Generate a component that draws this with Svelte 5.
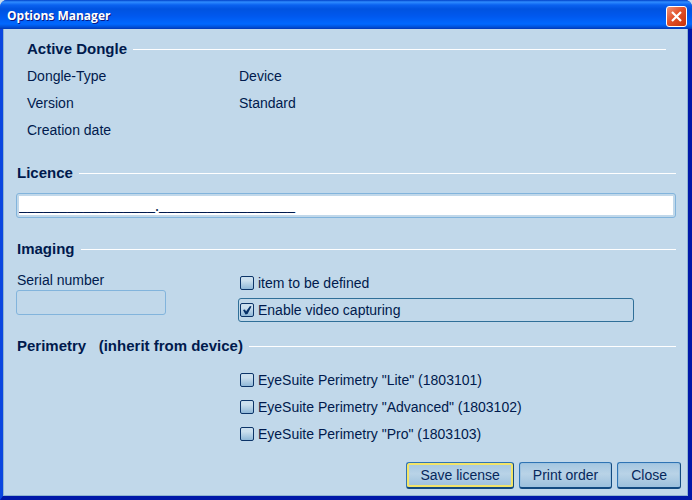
<script lang="ts">
	const dongle = [
		{ label: 'Dongle-Type', value: 'Device' },
		{ label: 'Version', value: 'Standard' },
		{ label: 'Creation date', value: '' }
	];

	let licence = $state('_'.repeat(17) + '.' + '_'.repeat(17));
	let serial = $state('');

	let imaging = $state([
		{ label: 'item to be defined', checked: false, current: false },
		{ label: 'Enable video capturing', checked: true, current: true }
	]);

	let perimetry = $state([
		{ label: 'EyeSuite Perimetry "Lite" (1803101)', checked: false },
		{ label: 'EyeSuite Perimetry "Advanced" (1803102)', checked: false },
		{ label: 'EyeSuite Perimetry "Pro" (1803103)', checked: false }
	]);
</script>

<div class="window">
	<header class="titlebar">
		<h1>Options Manager</h1>
		<button class="close" type="button" aria-label="Close window">
			<svg width="11" height="11" viewBox="0 0 11 11">
				<path d="M1 1 L10 10 M10 1 L1 10" stroke="#fff" stroke-width="2.2" />
			</svg>
		</button>
	</header>

	<main class="content">
		<section class="dongle">
			<h2>Active Dongle</h2>
			<dl>
				{#each dongle as item}
					<div class="row">
						<dt>{item.label}</dt>
						<dd>{item.value}</dd>
					</div>
				{/each}
			</dl>
		</section>

		<section class="licence">
			<h2><label for="licence">Licence</label></h2>
			<input id="licence" class="licence-input" type="text" spellcheck="false" bind:value={licence} />
		</section>

		<section class="imaging">
			<h2>Imaging</h2>
			<div class="columns">
				<div class="serial">
					<label for="serial">Serial number</label>
					<input id="serial" type="text" bind:value={serial} />
				</div>
				<div class="checks">
					{#each imaging as option}
						<label class="check" class:current={option.current}>
							<input type="checkbox" bind:checked={option.checked} />
							<span>{option.label}</span>
						</label>
					{/each}
				</div>
			</div>
		</section>

		<section class="perimetry">
			<h2>Perimetry &nbsp; (inherit from device)</h2>
			<div class="columns">
				<div></div>
				<div class="checks">
					{#each perimetry as option}
						<label class="check">
							<input type="checkbox" bind:checked={option.checked} />
							<span>{option.label}</span>
						</label>
					{/each}
				</div>
			</div>
		</section>

		<footer>
			<button class="btn primary" type="button">Save license</button>
			<button class="btn" type="button">Print order</button>
			<button class="btn" type="button">Close</button>
		</footer>
	</main>
</div>

<style>
	:global(body) {
		margin: 0;
		background: #c9dcec;
	}

	.window {
		display: flex;
		flex-direction: column;
		box-sizing: border-box;
		min-height: 100vh;
		border: solid;
		border-width: 0 4px 4px 3px;
		border-color: #0018a8 #0018a8 #0018a8 #0a46e0;
		border-radius: 7px 7px 0 0;
		background: #0054e3;
		font-family: 'Liberation Sans', Arial, sans-serif;
		font-size: 14px;
		line-height: 20px;
		color: #001a4d;
	}

	.titlebar {
		display: flex;
		align-items: center;
		justify-content: space-between;
		box-sizing: border-box;
		height: 29px;
		margin: 0 -4px 0 -3px;
		padding: 3px 5px 0 7px;
		border-radius: 7px 7px 0 0;
		background: linear-gradient(#0040c8 0, #2f8cff 2px, #0a62f0 5px, #0053e0 9px, #0058ee 16px, #0068ff 24px, #0050d8 27px, #0038b8 29px);
	}

	.titlebar h1 {
		margin: 0;
		font-family: 'Open Sans', 'Noto Sans', sans-serif;
		font-size: 12px;
		font-weight: 700;
		color: #fff;
		text-shadow: 1px 1px 0 #0a1883;
	}

	.close {
		display: flex;
		align-items: center;
		justify-content: center;
		width: 21px;
		height: 21px;
		padding: 0;
		border: 1px solid #fff;
		border-radius: 3px;
		background: linear-gradient(135deg, #f09478, #e2512a 45%, #c83208);
	}

	.content {
		flex: 1;
		padding: 10px 11px 6px 13px;
		border: 1px solid #8fb4d2;
		border-top: 0;
		background: #c1d8ea;
	}

	h2 {
		display: flex;
		align-items: center;
		gap: 6px;
		margin: 0;
		font-size: 15px;
		font-weight: 700;
		line-height: 20px;
	}

	h2::after {
		content: '';
		flex: 1;
		height: 1px;
		background: #fff;
	}

	.dongle {
		margin: 0 10px;
	}

	dl {
		margin: 4px 0 19px;
	}

	.row {
		display: grid;
		grid-template-columns: 212px 1fr;
		line-height: 27px;
	}

	dd {
		margin: 0;
	}

	input[type='text'] {
		display: block;
		box-sizing: border-box;
		width: 100%;
		height: 25px;
		padding: 0 3px;
		border: 1px solid #82b4dc;
		border-radius: 3px;
		background: transparent;
		color: inherit;
		font: inherit;
		outline: none;
	}

	.licence {
		margin-bottom: 21px;
	}

	.licence .licence-input {
		width: calc(100% + 1px);
		margin: 10px 0 0 -1px;
		padding: 2px;
		background: #fff content-box;
		font-family: 'Liberation Serif', serif;
		font-size: 16px;
	}

	.columns {
		display: grid;
		grid-template-columns: 221px 1fr;
		padding-top: 11px;
	}

	.serial input[type='text'] {
		width: 150px;
		margin-left: -1px;
	}

	.checks {
		display: flex;
		flex-direction: column;
		gap: 3px;
		padding-top: 1px;
	}

	.check {
		display: flex;
		align-items: center;
		box-sizing: border-box;
		gap: 4px;
		height: 24px;
		padding-left: 1px;
		border: 1px solid transparent;
		border-radius: 3px;
	}

	.check.current {
		margin-right: 42px;
		border-color: #2f6f98;
	}

	.check input {
		appearance: none;
		flex: none;
		width: 14px;
		height: 14px;
		margin: 0;
		border: 1px solid #0c3468;
		border-radius: 2px;
		background: linear-gradient(#cbdfee 30%, #90b8d8);
	}

	.check input:checked {
		background: url("data:image/svg+xml,%3Csvg xmlns='http://www.w3.org/2000/svg' viewBox='0 0 12 12'%3E%3Cpath d='M2 6 L4 5.5 L5 7.5 L9 2 L10.5 2.5 L6.5 10 L4.5 10.5 Z' fill='%23063068'/%3E%3C/svg%3E"), linear-gradient(#cbdfee 30%, #90b8d8);
	}

	.imaging {
		margin-bottom: 14px;
	}

	footer {
		display: flex;
		justify-content: flex-end;
		gap: 5px;
		margin: 16px -5px 0 0;
	}

	.btn {
		height: 27px;
		padding: 0 13px;
		border: 1px solid #2f74b4;
		border-right-color: #124a80;
		border-bottom: 2px solid #124a80;
		border-radius: 3px;
		background: linear-gradient(#a4c6e0, #b9d3e7 45%, #9cc0dc);
		box-shadow: inset 0 0 0 1px #9dc2e0;
		color: #06285c;
		font: inherit;
	}

	.btn.primary {
		box-shadow: inset 0 0 0 2px #f2e468;
	}
</style>
